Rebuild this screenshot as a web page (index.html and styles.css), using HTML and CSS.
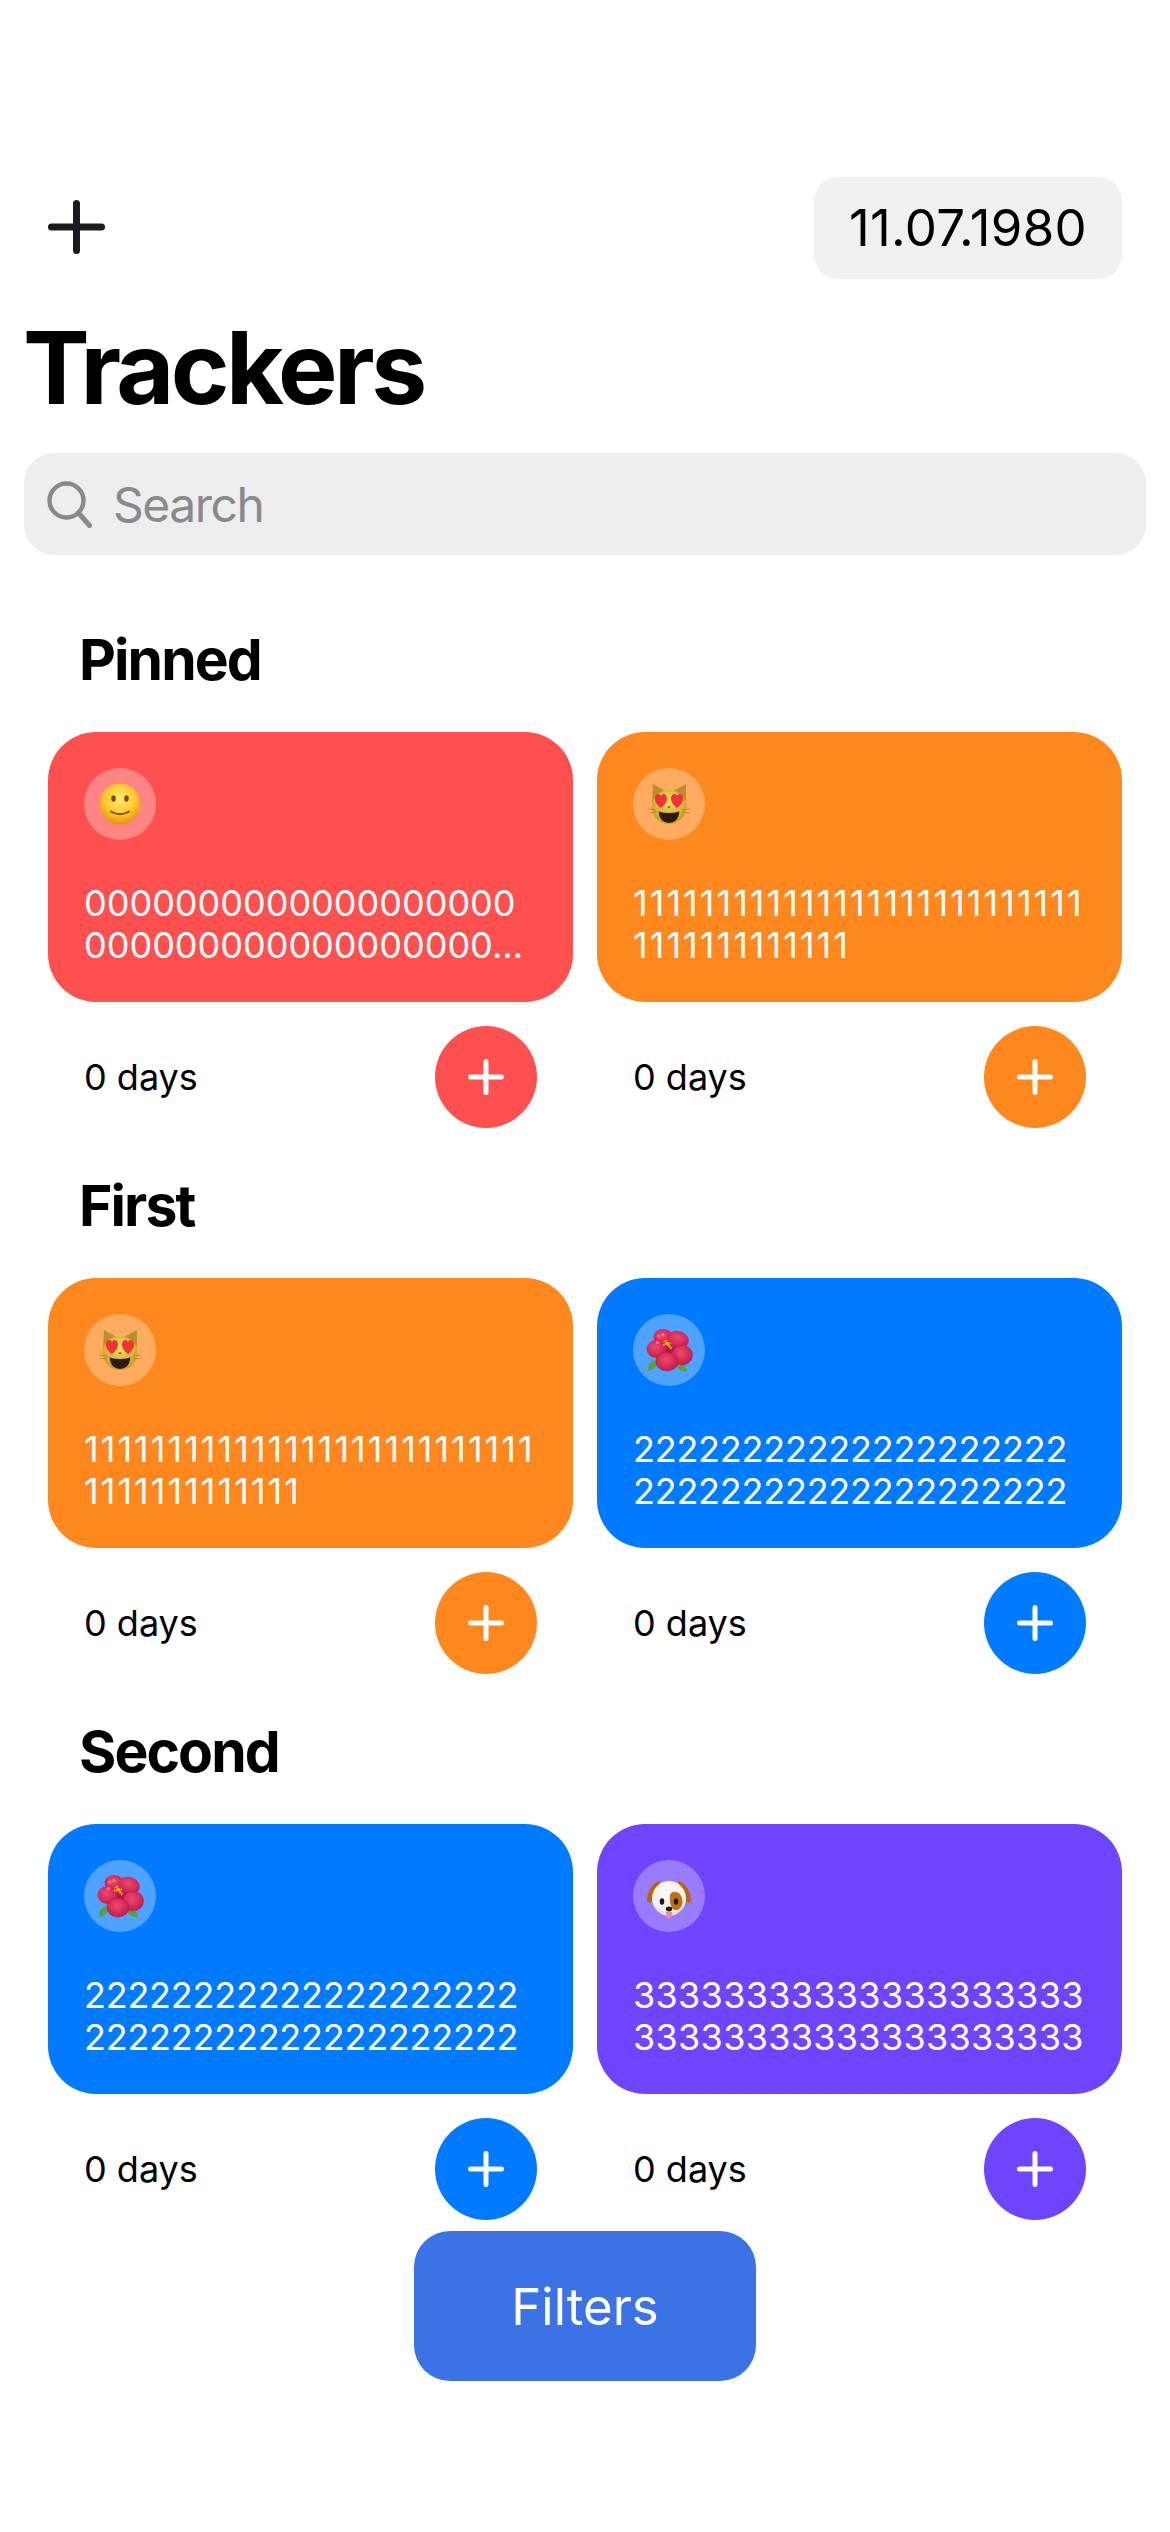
FILE: index.html
```html
<!DOCTYPE html>
<html lang="en">
<head>
    <meta charset="UTF-8">
    <title>Trackers</title>
    <link rel="stylesheet" href="styles.css">
</head>
<body>
<svg class="sprite" aria-hidden="true">
    <defs>
        <radialGradient id="faceGold" cx="50%" cy="38%" r="62%">
            <stop offset="0" stop-color="#ffe96a"/>
            <stop offset=".6" stop-color="#fdc92e"/>
            <stop offset="1" stop-color="#e8920c"/>
        </radialGradient>
        <radialGradient id="catGold" cx="50%" cy="35%" r="65%">
            <stop offset="0" stop-color="#f4de5c"/>
            <stop offset="1" stop-color="#c99a1f"/>
        </radialGradient>
        <radialGradient id="petal" cx="45%" cy="40%" r="65%">
            <stop offset="0" stop-color="#ee4a6a"/>
            <stop offset="1" stop-color="#c4164c"/>
        </radialGradient>
        <radialGradient id="dogWhite" cx="50%" cy="35%" r="70%">
            <stop offset="0" stop-color="#ffffff"/>
            <stop offset=".75" stop-color="#f2eeea"/>
            <stop offset="1" stop-color="#c9c2bc"/>
        </radialGradient>
    </defs>
    <symbol id="smile" viewBox="-24 -24 48 48">
        <circle r="20.5" fill="url(#faceGold)"/>
        <ellipse cx="-6.5" cy="-5.5" rx="2.2" ry="3.2" fill="#7a4a12"/>
        <ellipse cx="6.5" cy="-5.5" rx="2.2" ry="3.2" fill="#7a4a12"/>
        <path d="M-9 7.5 Q0 13 9 7.5" fill="none" stroke="#7a4a12" stroke-width="1.8" stroke-linecap="round"/>
    </symbol>
    <symbol id="cat" viewBox="-24 -24 48 48">
        <path d="M-16 -20 L-17 -2 L-2 -12 Z" fill="#b98f2c"/>
        <path d="M17 -20 L17 -2 L2 -12 Z" fill="#b98f2c"/>
        <ellipse cy="3" rx="17.500" ry="17" fill="url(#catGold)"/>
        <path d="M-21 5 L-13 6 M-20 9 L-13 8 M21 5 L13 6 M20 9 L13 8" stroke="#9d7c2a" stroke-width=".7"/>
        <path d="M-8 4 C-15.500 -1 -15.500 -9.500 -11 -10 C-9.500 -10.100 -8.600 -9.200 -8 -8 C-7.400 -9.400 -6 -10.300 -4.500 -9.700 C-.5 -8 -1 -1 -8 4 Z" fill="#f0303a"/>
        <path d="M8 4 C1 -1 .5 -8 4.500 -9.700 C6 -10.300 7.400 -9.400 8 -8 C8.600 -9.200 9.500 -10.100 11 -10 C15.500 -9.500 15.500 -1 8 4 Z" fill="#f0303a"/>
        <path d="M-1.800 2.400 H1.800 L0 4.400 Z" fill="#6b4a3a"/>
        <path d="M-10.500 7.500 Q0 10.500 10.500 7.500 Q9 19 0 19 Q-9 19 -10.500 7.500 Z" fill="#2a1a12"/>
    </symbol>
    <symbol id="flower" viewBox="-24 -24 48 48">
        <path d="M-21 21 Q-22 12 -12 9 Q-11 19 -21 21 Z" fill="#5c9e3a"/>
        <path d="M18 21 Q10 22 7 15 Q16 11 18 21 Z" fill="#5c9e3a"/>
        <circle cy="-1" r="13" fill="#b5144a"/>
        <ellipse cx="-6" cy="-13" rx="9.500" ry="8" fill="url(#petal)"/>
        <ellipse cx="9" cy="-10.500" rx="11" ry="8.500" transform="rotate(15 9 -10.500)" fill="url(#petal)"/>
        <ellipse cx="-12.500" cy="-1" rx="10" ry="9" fill="url(#petal)"/>
        <ellipse cx="13" cy="5" rx="10.500" ry="10" fill="url(#petal)" stroke="#a81442" stroke-width=".5"/>
        <ellipse cx="-2" cy="11.500" rx="11" ry="9.500" fill="url(#petal)" stroke="#a81442" stroke-width=".5"/>
        <circle cx="-10.500" cy="-14" r="1.600" fill="#f47a80"/>
        <circle cx="-6" cy="-15.500" r="1.600" fill="#f47a80"/>
        <circle cx="-11.500" cy="-7.500" r="1.600" fill="#f47a80"/>
        <path d="M-5 -9 L3 -1" stroke="#e0980c" stroke-width="3" stroke-dasharray="1.500 .8"/>
        <path d="M-3 -10 L1 -3 M-6 -5 L2 -7" stroke="#f5bd10" stroke-width="1.800" stroke-dasharray="1.500 .8"/>
    </symbol>
    <symbol id="dog" viewBox="-24 -24 48 48">
        <path d="M-9 -15 C-17 -14 -22 -3 -22 4 C-22 7 -19 8 -17 5 L-9 -4 Z" fill="#b9650c"/>
        <path d="M9 -15 C17 -14 22 -3 22 4 C22 7 19 8 17 5 L9 -4 Z" fill="#b9650c"/>
        <ellipse cy="2.500" rx="17" ry="17.500" fill="url(#dogWhite)"/>
        <path d="M2 -3 C6 -6 13 -3 13.500 5 C14 12 8 16 4.500 13.500 C1 11 -.5 0 2 -3 Z" fill="#c4700f"/>
        <ellipse cx="-7" cy="5.500" rx="2.300" ry="3.200" fill="#1e1a18"/>
        <ellipse cx="7" cy="5.500" rx="2.300" ry="3.200" fill="#1e1a18"/>
        <path d="M-3 16 Q-3 22.500 0 22.500 Q3 22.500 3 16 Z" fill="#ef8a9a"/>
        <ellipse cy="13" rx="3.200" ry="2.400" fill="#1e1a18"/>
    </symbol>
    <symbol id="plus" viewBox="0 0 36 36">
        <path d="M18 2.500 V33.500 M2.500 18 H33.500" fill="none" stroke="#fff" stroke-width="5" stroke-linecap="round"/>
    </symbol>
</svg>

<div class="topbar">
    <svg class="add-icon" viewBox="0 0 57 54"><path d="M28.500 3.500 V50.500 M3.500 27 H53.500" fill="none" stroke="#1a1b22" stroke-width="7" stroke-linecap="round"/></svg>
    <div class="date">11.07.1980</div>
</div>
<h1 class="title">Trackers</h1>
<div class="search">
    <svg class="search-icon" viewBox="0 0 45 47"><circle cx="19.500" cy="19.500" r="17" fill="none" stroke="#8a8a8e" stroke-width="4.500"/><path d="M31.500 32 L42.500 44.500" fill="none" stroke="#8a8a8e" stroke-width="5" stroke-linecap="round"/></svg>
    <span>Search</span>
</div>

<section class="group">
    <h2>Pinned</h2>
    <div class="grid">
        <div class="tracker red">
            <div class="card">
                <div class="emoji"><svg><use href="#smile"/></svg></div>
                <p>0000000000000000000<br>000000000000000000...</p>
            </div>
            <div class="foot"><span>0 days</span><div class="done"><svg><use href="#plus"/></svg></div></div>
        </div>
        <div class="tracker orange">
            <div class="card">
                <div class="emoji"><svg><use href="#cat"/></svg></div>
                <p class="ones">111111111111111111111111111<br>1111111111111</p>
            </div>
            <div class="foot"><span>0 days</span><div class="done"><svg><use href="#plus"/></svg></div></div>
        </div>
    </div>
</section>

<section class="group">
    <h2>First</h2>
    <div class="grid">
        <div class="tracker orange">
            <div class="card">
                <div class="emoji"><svg><use href="#cat"/></svg></div>
                <p class="ones">111111111111111111111111111<br>1111111111111</p>
            </div>
            <div class="foot"><span>0 days</span><div class="done"><svg><use href="#plus"/></svg></div></div>
        </div>
        <div class="tracker blue">
            <div class="card">
                <div class="emoji"><svg><use href="#flower"/></svg></div>
                <p class="twos">22222222222222222222<br>22222222222222222222</p>
            </div>
            <div class="foot"><span>0 days</span><div class="done"><svg><use href="#plus"/></svg></div></div>
        </div>
    </div>
</section>

<section class="group">
    <h2>Second</h2>
    <div class="grid">
        <div class="tracker blue">
            <div class="card">
                <div class="emoji"><svg><use href="#flower"/></svg></div>
                <p class="twos">22222222222222222222<br>22222222222222222222</p>
            </div>
            <div class="foot"><span>0 days</span><div class="done"><svg><use href="#plus"/></svg></div></div>
        </div>
        <div class="tracker purple">
            <div class="card">
                <div class="emoji"><svg><use href="#dog"/></svg></div>
                <p class="threes">33333333333333333333<br>33333333333333333333</p>
            </div>
            <div class="foot"><span>0 days</span><div class="done"><svg><use href="#plus"/></svg></div></div>
        </div>
    </div>
</section>

<button class="filters">Filters</button>
</body>
</html>
```

FILE: styles.css
```css
*{ padding: 0; margin: 0; box-sizing: border-box;}
html,body{
    height: 2532px;
    overflow: hidden;
}
body{
    position: relative;
    background: #fff;
    color: #000;
    font-family: Inter, "Liberation Sans", sans-serif;
}
.sprite{
    position: absolute;
    width: 0;
    height: 0;
}

.topbar{
    display: flex;
    justify-content: space-between;
    align-items: center;
    height: 102px;
    margin-top: 177px;
    padding: 0 48px;
}
.add-icon{
    width: 57px;
    height: 54px;
    margin-bottom: 2px;
}
.date{
    width: 308px;
    height: 102px;
    line-height: 102px;
    text-align: center;
    font-size: 51px;
    letter-spacing: .3px;
    background: #f0f0f0;
    border-radius: 24px;
}
.title{
    height: 122px;
    margin: 28px 0 24px 23px;
    font-size: 100px;
    line-height: 122px;
    font-weight: 700;
    letter-spacing: -3.6px;
}
.search{
    display: flex;
    align-items: center;
    gap: 21px;
    height: 102px;
    margin: 0 24px;
    padding-left: 23px;
    background: #eeeeef;
    border-radius: 30px;
    color: #8a8a8e;
    font-size: 48px;
    letter-spacing: -1.5px;
}
.search-icon{
    width: 45px;
    height: 47px;
}

.group{
    padding: 0 48px;
    margin-bottom: 44px;
}
.search + .group{
    margin-top: 71px;
}
.group h2{
    height: 68px;
    margin: 0 0 38px 31px;
    font-size: 57px;
    line-height: 68px;
    font-weight: 700;
    letter-spacing: -1.9px;
}
.grid{
    display: grid;
    grid-template-columns: 525px 525px;
    gap: 24px;
}
.card{
    display: flex;
    flex-direction: column;
    justify-content: space-between;
    height: 270px;
    padding: 36px;
    border-radius: 48px;
    background: var(--color);
    color: #fff;
}
.card p{
    font-size: 36px;
    line-height: 42px;
    white-space: nowrap;
}
.card p.ones{
    letter-spacing: 2.05px;
}
.card p.twos{
    letter-spacing: -.25px;
}
.card p.threes{
    letter-spacing: .3px;
}
.emoji{
    display: flex;
    align-items: center;
    justify-content: center;
    width: 72px;
    height: 72px;
    border-radius: 50%;
    background: rgba(255,255,255,.3);
}
.emoji svg{
    width: 48px;
    height: 48px;
}
.foot{
    display: flex;
    justify-content: space-between;
    align-items: center;
    height: 102px;
    margin-top: 24px;
    padding: 0 36px;
    font-size: 36px;
}
.done{
    display: flex;
    align-items: center;
    justify-content: center;
    width: 102px;
    height: 102px;
    border-radius: 50%;
    background: var(--color);
}
.done svg{
    width: 36px;
    height: 36px;
}

.red{ --color: #ff5050;}
.orange{ --color: #ff881e;}
.blue{ --color: #007bff;}
.purple{ --color: #6e44fe;}

.filters{
    position: absolute;
    left: 414px;
    top: 2231px;
    width: 342px;
    height: 150px;
    border: 0;
    border-radius: 36px;
    background: #3b72e6;
    color: #fff;
    font-family: inherit;
    font-size: 51px;
}
```
